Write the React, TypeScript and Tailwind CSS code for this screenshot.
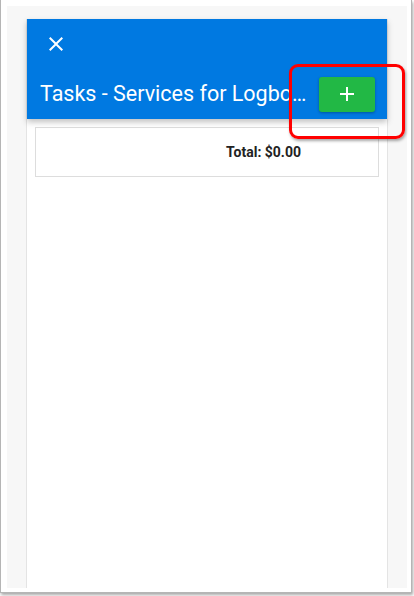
import React from 'react';

function App() {
  return (
    <div className="relative w-[414px] h-[596px] bg-white overflow-hidden font-['Roboto',sans-serif]">
      <div className="w-[412px] h-[593px] border-x border-b border-[#b5b5b5] shadow-[1px_2px_3px_rgba(0,0,0,0.35)] bg-white pt-[6px] pl-[6px] pr-[4px] pb-[4px]">
        <div className="h-full bg-[#f7f7f7] px-[19px] pt-[13px]">
          <div className="h-full bg-white border-x border-[#e4e4e4]">
            <div className="relative z-10 h-[100px] bg-[#0079e1] shadow-[0_3px_6px_rgba(0,0,0,0.25)] flex flex-col">
              <div className="h-[50px] flex items-center pl-[17px]">
                <svg width="24" height="24" viewBox="0 0 24 24" fill="white">
                  <path d="M19 6.41L17.59 5 12 10.59 6.41 5 5 6.41 10.59 12 5 17.59 6.41 19 12 13.41 17.59 19 19 17.59 13.41 12z" />
                </svg>
              </div>
              <div className="h-[50px] flex items-center pl-[13px] pr-[12px] gap-[11px]">
                <h1 className="flex-1 min-w-0 truncate text-white text-[21.5px] leading-[26px]">
                  Tasks - Services for Logbook
                </h1>
                <button className="shrink-0 w-[56px] h-[35px] rounded-[3px] bg-[#22b845] shadow-[0_1px_3px_rgba(0,0,0,0.3)] flex items-center justify-center">
                  <svg width="24" height="24" viewBox="0 0 24 24" fill="white">
                    <path d="M19 13h-6v6h-2v-6H5v-2h6V5h2v6h6v2z" />
                  </svg>
                </button>
              </div>
            </div>
            <div className="mx-[8px] mt-[8px] h-[50px] border border-[#dddddd] flex items-center justify-end pr-[77px]">
              <span className="text-[14px] font-bold text-[#222]">Total: $0.00</span>
            </div>
          </div>
        </div>
      </div>
      <div className="absolute left-[289px] top-[64px] w-[116px] h-[75px] border-[3px] border-[#ff0000] rounded-[9px] z-20 shadow-[1px_2px_3px_rgba(0,0,0,0.35)]" />
    </div>
  );
}

export default App;
